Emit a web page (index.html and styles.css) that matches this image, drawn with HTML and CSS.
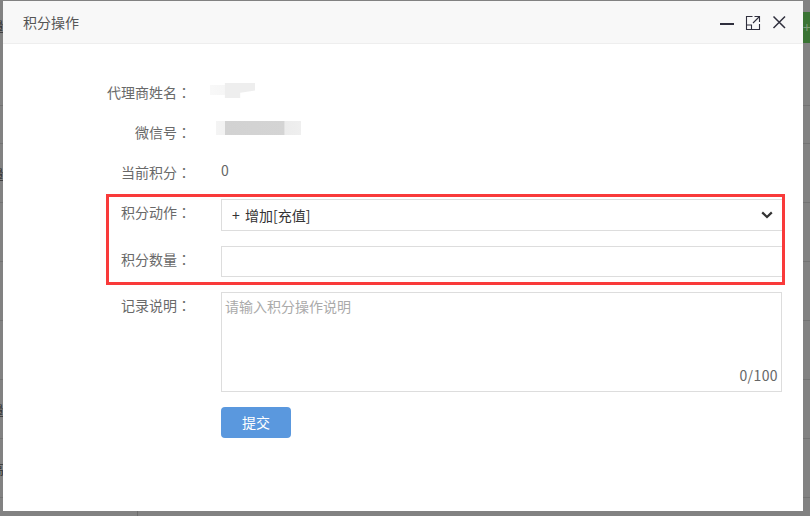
FILE: index.html
```html
<!DOCTYPE html>
<html lang="zh">
<head>
<meta charset="utf-8">
<title>积分操作</title>
<link rel="stylesheet" href="styles.css">
</head>
<body>
<div class="backdrop">
  <div class="bg-row bg-row-top"><span>量</span></div>
  <div class="bg-row bg-row-short"></div>
  <div class="bg-row"><span>量</span></div>
  <div class="bg-row"><span>2</span></div>
  <div class="bg-row"><span>]</span></div>
  <div class="bg-row"><span>2</span></div>
  <div class="bg-row"><span>量</span></div>
  <div class="bg-row"><span>高</span></div>
</div>
<div class="bg-green">+</div>
<div class="bg-tick"></div>
<main class="dialog">
  <header class="dialog-head">
    <h1 class="dialog-title">积分操作</h1>
    <div class="dialog-tools">
      <svg class="tool" width="16" height="16" viewBox="0 0 16 16"><path d="M1 10h14" stroke="#2f2f3d" stroke-width="2" fill="none"/></svg>
      <svg class="tool" width="16" height="16" viewBox="0 0 16 16" fill="none" stroke="#2f2f3d" stroke-width="1.1"><path d="M7.5 2.5H1.5V15.5H14.5V10M9.5 2.5H14.5V8M14 3 8 9"/><path d="M1.5 11H6.5V15.5"/></svg>
      <svg class="tool" width="16" height="16" viewBox="0 0 16 16" fill="none" stroke="#2f2f3d" stroke-width="1.5"><path d="M2.5 2.5 14 14M14 2.5 2.5 14"/></svg>
    </div>
  </header>
  <form class="form">
    <div class="row-info"><span class="label">代理商姓名<span class="colon" lang="zh-TW">：</span></span><span class="value"><span class="smudge smudge-name"></span></span></div>
    <div class="row-info"><span class="label">微信号<span class="colon" lang="zh-TW">：</span></span><span class="value"><span class="smudge smudge-wx"></span></span></div>
    <div class="row-info"><span class="label">当前积分<span class="colon" lang="zh-TW">：</span></span><span class="value value-num">0</span></div>
    <div class="row row-action">
      <label class="label">积分动作<span class="colon" lang="zh-TW">：</span></label>
      <div class="control control-select"><span class="select-text">+ 增加[充值]</span>
        <svg width="12" height="8" viewBox="0 0 12 8" fill="none" stroke="#333" stroke-width="2.2"><path d="M1.2 1.4 6 6 10.8 1.4"/></svg>
      </div>
    </div>
    <div class="row">
      <label class="label">积分数量<span class="colon" lang="zh-TW">：</span></label>
      <div class="control control-input"></div>
    </div>
    <div class="row">
      <label class="label">记录说明<span class="colon" lang="zh-TW">：</span></label>
      <div class="control control-area">
        <span class="placeholder">请输入积分操作说明</span>
        <span class="count">0/100</span>
      </div>
    </div>
    <div class="row">
      <span class="label"></span>
      <button type="button" class="submit">提交</button>
    </div>
    <div class="highlight"></div>
  </form>
</main>
</body>
</html>
```

FILE: styles.css
```css
* { box-sizing: border-box; }
html, body { margin: 0; height: 100%; }
body {
  width: 810px;
  height: 516px;
  position: relative;
  overflow: hidden;
  background: #828282;
  font-family: "Noto Sans CJK SC", "Noto Sans", sans-serif;
  font-size: 14px;
  color: #666;
}
.bg-row {
  height: 59px;
  border-bottom: 1px solid #737373;
  display: flex;
  align-items: center;
  color: #333;
  font-size: 13px;
  overflow: hidden;
}
.bg-row span { margin-left: -9px; }
.bg-row-top {
  height: 106px;
  align-items: flex-start;
  padding-top: 16px;
}
.bg-row-short { height: 38px; }
.bg-green {
  position: absolute;
  left: 803px;
  top: 12px;
  width: 7px;
  height: 31px;
  background: #3a7434;
  color: #7e9c7a;
  font-size: 14px;
  line-height: 31px;
  overflow: hidden;
}
.bg-tick {
  position: absolute;
  left: 137px;
  top: 511px;
  width: 1px;
  height: 5px;
  background: #6c6c6c;
}
.dialog {
  position: absolute;
  left: 3px;
  top: 1px;
  width: 800px;
  height: 510px;
  background: #fff;
  display: flex;
  flex-direction: column;
}
.dialog-head {
  height: 43px;
  flex: none;
  background: #f8f8f8;
  border-bottom: 1px solid #eee;
  display: flex;
  align-items: center;
  justify-content: space-between;
  padding: 0 16px 0 20px;
}
.dialog-title {
  margin: 0;
  font-size: 14px;
  font-weight: 400;
  color: #555;
}
.dialog-tools { display: flex; align-items: center; gap: 10px; }
.tool { display: block; }
.form { position: relative; flex: 1; padding-top: 29px; }
.row-info { display: flex; height: 40px; align-items: center; }
.row-info .label { padding-bottom: 2px; }
.row { display: flex; margin-bottom: 15px; }
.row-action { margin-top: 6px; }
.label {
  width: 188px;
  flex: none;
  text-align: right;
  margin-right: 30px;
  color: #696969;
  font-size: 14px;
  line-height: 26px;
}
.colon { font-family: "Noto Sans CJK TC", sans-serif; }
.value { position: relative; display: block; width: 100px; height: 20px; }
.value-num { font-size: 14px; color: #666; line-height: 14px; height: 14px; margin-top: -7px; }
.smudge {
  position: absolute;
  display: block;
  filter: blur(0.7px);
}
.smudge-name {
  left: -11px;
  top: 0;
  width: 45px;
  height: 15px;
  background: linear-gradient(90deg, #f8f8f8, #f6f6f6 32%, #eeeeee 34%, #eeeeee 100%);
  clip-path: polygon(0 13%, 33% 13%, 33% 0, 100% 0, 100% 50%, 67% 65%, 67% 100%, 33% 100%, 33% 80%, 0 80%);
}
.smudge-wx {
  left: -5px;
  top: -2px;
  width: 85px;
  height: 14px;
  background: linear-gradient(90deg, #f4f4f4, #f2f2f2 10%, #d2d2d2 11%, #d4d4d4 80%, #ececec 81%, #efefef 100%);
}
.control {
  width: 562px;
  border: 1px solid #ddd;
  background: #fff;
}
.control-select {
  height: 32px;
  display: flex;
  align-items: center;
  justify-content: space-between;
  padding: 0 9px 0 10px;
  color: #333;
}
.select-text { word-spacing: 2px; }
.control-input { height: 31px; }
.control-area {
  height: 100px;
  position: relative;
  width: 561px;
  padding: 3px 3px;
}
.placeholder { color: #aaa; }
.count {
  position: absolute;
  right: 3px;
  bottom: 8px;
  line-height: 16px;
  letter-spacing: 0.4px;
  color: #666;
}
.submit {
  width: 70px;
  height: 31px;
  border: 0;
  border-radius: 4px;
  background: #5a98de;
  color: #fff;
  font: inherit;
  font-size: 14px;
  padding: 0 0 2px;
}
.highlight {
  position: absolute;
  left: 103px;
  top: 150px;
  width: 679px;
  height: 91px;
  border: 3px solid #f93a3a;
  pointer-events: none;
}
```
